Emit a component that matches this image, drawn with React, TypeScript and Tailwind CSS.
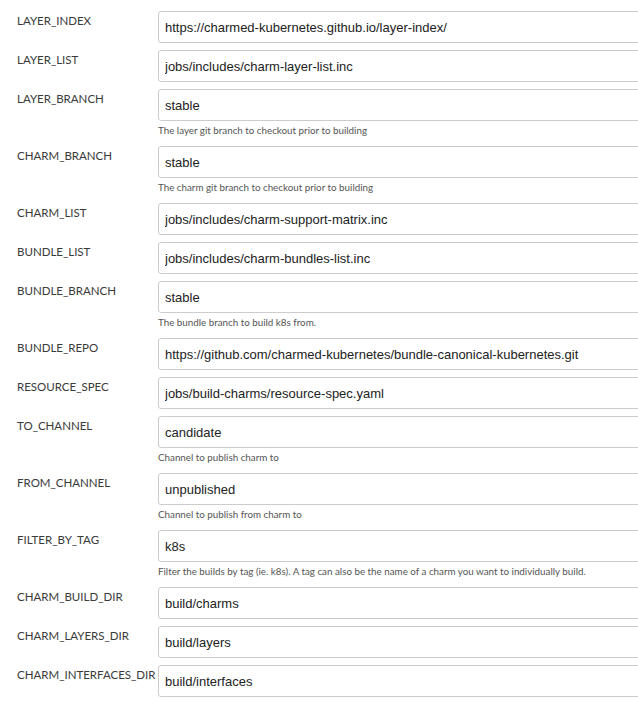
import React from 'react'

interface Param {
  name: string
  value: string
  help?: string
}

const params: Param[] = [
  { name: 'LAYER_INDEX', value: 'https://charmed-kubernetes.github.io/layer-index/' },
  { name: 'LAYER_LIST', value: 'jobs/includes/charm-layer-list.inc' },
  { name: 'LAYER_BRANCH', value: 'stable', help: 'The layer git branch to checkout prior to building' },
  { name: 'CHARM_BRANCH', value: 'stable', help: 'The charm git branch to checkout prior to building' },
  { name: 'CHARM_LIST', value: 'jobs/includes/charm-support-matrix.inc' },
  { name: 'BUNDLE_LIST', value: 'jobs/includes/charm-bundles-list.inc' },
  { name: 'BUNDLE_BRANCH', value: 'stable', help: 'The bundle branch to build k8s from.' },
  { name: 'BUNDLE_REPO', value: 'https://github.com/charmed-kubernetes/bundle-canonical-kubernetes.git' },
  { name: 'RESOURCE_SPEC', value: 'jobs/build-charms/resource-spec.yaml' },
  { name: 'TO_CHANNEL', value: 'candidate', help: 'Channel to publish charm to' },
  { name: 'FROM_CHANNEL', value: 'unpublished', help: 'Channel to publish from charm to' },
  {
    name: 'FILTER_BY_TAG',
    value: 'k8s',
    help: 'Filter the builds by tag (ie. k8s). A tag can also be the name of a charm you want to individually build.',
  },
  { name: 'CHARM_BUILD_DIR', value: 'build/charms' },
  { name: 'CHARM_LAYERS_DIR', value: 'build/layers' },
  { name: 'CHARM_INTERFACES_DIR', value: 'build/interfaces' },
]

export default function App() {
  return (
    <div className="w-[638px] h-[701px] overflow-hidden bg-white font-['Lato',sans-serif]">
      <div className="flex flex-col gap-[7px] pt-[11px]">
        {params.map((p) => (
          <div key={p.name} className="flex flex-col">
            <div className="flex">
              <div className="w-[158px] shrink-0 pl-[17px] pt-[1px] text-[11.5px] leading-[18px] text-[#3a3a3a] whitespace-nowrap">
                {p.name}
              </div>
              <input
                type="text"
                defaultValue={p.value}
                className="w-[500px] shrink-0 h-[32px] px-[6px] border border-[#ccc] rounded-[3px] bg-white text-[13px] text-[#222] font-['Liberation_Sans',Arial,sans-serif] outline-none"
              />
            </div>
            {p.help && (
              <div className="pl-[158px] h-[18px] pt-[3px] text-[9.8px] leading-[12px] text-[#555] whitespace-nowrap">
                {p.help}
              </div>
            )}
          </div>
        ))}
      </div>
    </div>
  )
}
